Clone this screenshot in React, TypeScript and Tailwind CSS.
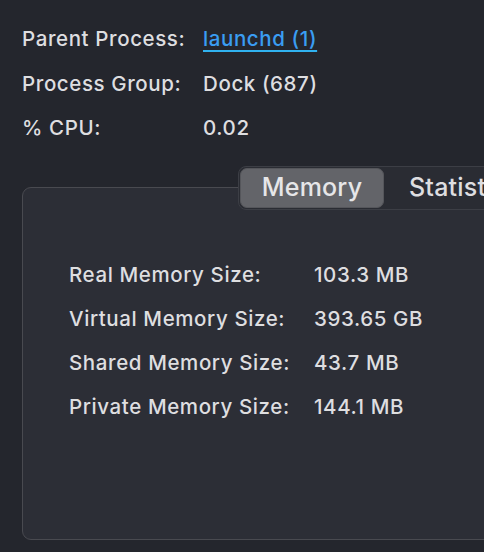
const info = [
  { label: "Parent Process:", value: "launchd (1)", link: true },
  { label: "Process Group:", value: "Dock (687)" },
  { label: "% CPU:", value: "0.02" },
];

const memory = [
  { label: "Real Memory Size:", value: "103.3 MB" },
  { label: "Virtual Memory Size:", value: "393.65 GB" },
  { label: "Shared Memory Size:", value: "43.7 MB" },
  { label: "Private Memory Size:", value: "144.1 MB" },
];

export default function App() {
  return (
    <div className="w-[484px] h-[552px] overflow-hidden bg-[#24262d] pl-[22px] pt-[17px] font-['Inter',sans-serif] text-[20.5px] font-[450] tracking-[0.6px] text-[#dedee0]">
      {/* process info */}
      <div className="grid grid-cols-[181px_1fr]">
        {info.map((row) => (
          <div key={row.label} className="contents">
            <div className="h-[44.5px] leading-[44px] whitespace-nowrap">{row.label}</div>
            <div className="h-[44.5px] leading-[44px] whitespace-nowrap">
              {row.link ? (
                <span className="text-[#3a9df2] underline decoration-[#30b2f0] underline-offset-[4px]">
                  {row.value}
                </span>
              ) : (
                row.value
              )}
            </div>
          </div>
        ))}
      </div>

      {/* tabs */}
      <div className="relative z-10 mt-[15px] ml-[216px] flex h-[44px] w-[300px] items-center rounded-[8px] border border-[#3c3e45] bg-[#2a2c33] px-px text-[25px] tracking-[0.2px] whitespace-nowrap">
        <div className="flex h-[40px] w-[144px] items-center justify-center rounded-[7px] border border-[#55565b] bg-[#636469] text-[#e6e6e8]">
          Memory
        </div>
        <div className="pl-[25px]">Statistics</div>
      </div>

      {/* memory box */}
      <div className="-mt-[23px] h-[353px] w-[520px] rounded-[9px] border border-[#494a50] bg-[#2c2e36] pl-[46px] pt-[65px]">
        <div className="grid grid-cols-[245px_1fr]">
          {memory.map((row) => (
            <div key={row.label} className="contents">
              <div className="h-[44px] leading-[44px] whitespace-nowrap">{row.label}</div>
              <div className="h-[44px] leading-[44px] whitespace-nowrap">{row.value}</div>
            </div>
          ))}
        </div>
      </div>
    </div>
  );
}
